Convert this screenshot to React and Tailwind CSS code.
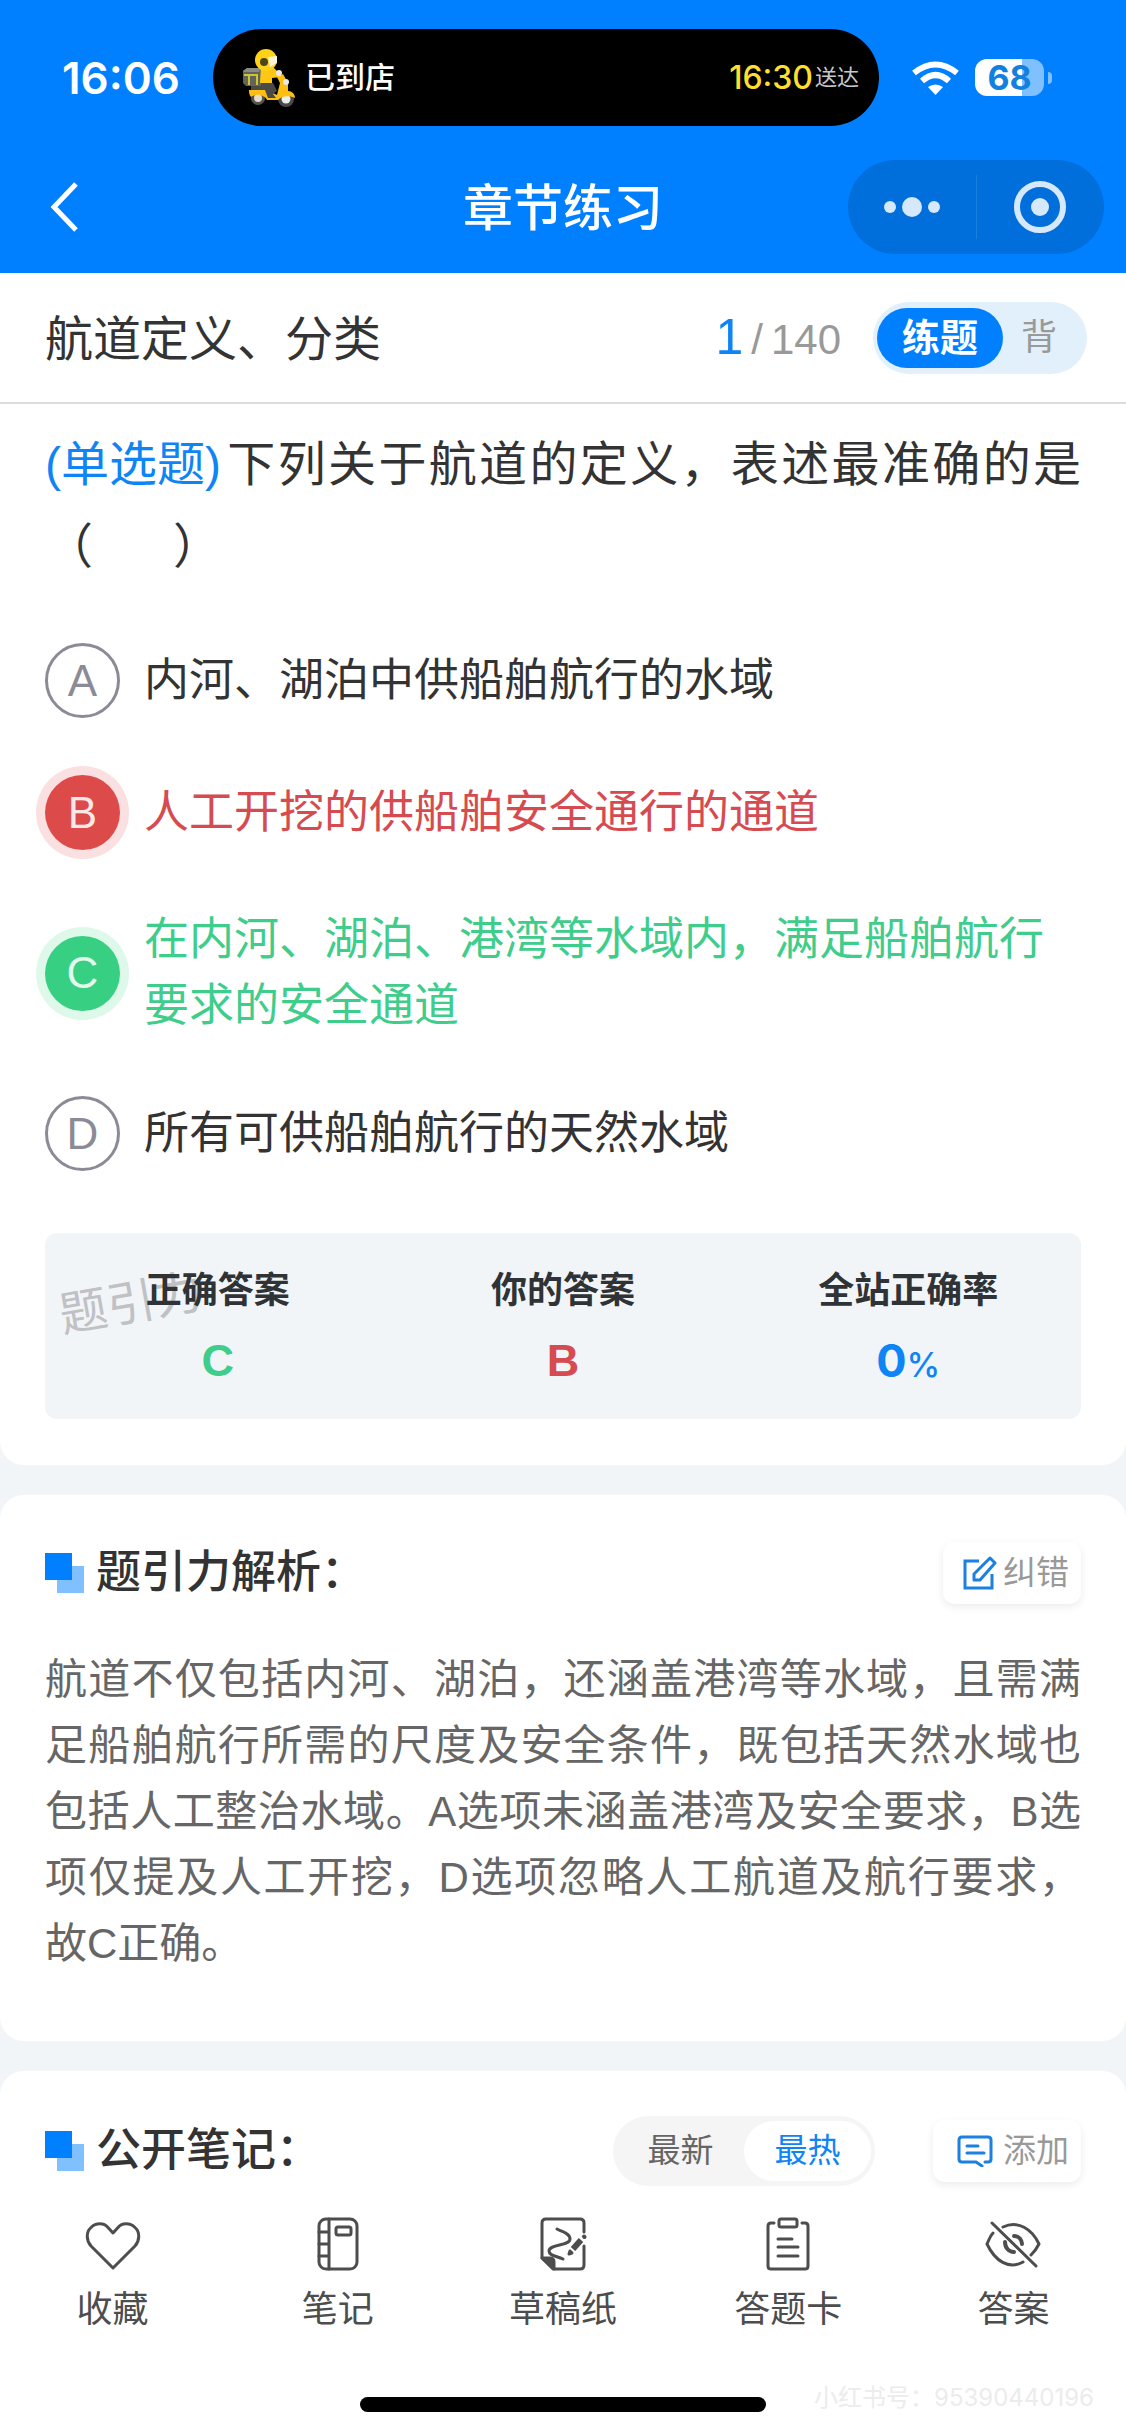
import React, { useState } from "react";

const options = [
  { key: "A", text: "内河、湖泊中供船舶航行的水域", state: "idle" },
  { key: "B", text: "人工开挖的供船舶安全通行的通道", state: "wrong" },
  {
    key: "C",
    text: "在内河、湖泊、港湾等水域内，满足船舶航行要求的安全通道",
    state: "right",
  },
  { key: "D", text: "所有可供船舶航行的天然水域", state: "idle" },
];

const badgeStyles = {
  idle: "border-[3px] border-[#8b8b97] text-[#8b8b97]",
  wrong: "bg-[#dd4a4a] text-[#fde8e8] ring-9 ring-[#fbe0e1]",
  right: "bg-[#37d083] text-[#e3faee] ring-9 ring-[#def8ea]",
};

const textStyles = {
  idle: "text-[#333333]",
  wrong: "text-[#d64b4f]",
  right: "text-[#3fcd8b]",
};

const RiderIcon = () => (
  <svg viewBox="0 0 52 58" className="h-[58px] w-[52px]">
    <circle cx="15" cy="49" r="7" fill="#55534e" />
    <circle cx="15" cy="49" r="4" fill="#e8dcc8" />
    <circle cx="43" cy="50" r="8" fill="#4a4a4a" />
    <circle cx="43" cy="50" r="4.500" fill="#eee" />
    <path d="M6 41h18l10 5 3-12-3-6 6-3 5 9v8c4 0 7 3 7 7-6-3-14-2-17 2H24c-2-5-12-7-16-3-2-2-2-5-2-7z" fill="#fdc012" />
    <path d="M18 34h12l4 8-4 3 3 4h-8l-3-8H8v-4z" fill="#4a4a48" />
    <path d="M0 22l4-3h14v18H3l-3-3z" fill="#63635a" />
    <path d="M0 22l4-3h14l-2 4H1z" fill="#8b8b85" />
    <path d="M1 25h14v2H1zM5 25h2v11H5zM13 25h2v11h-2z" fill="#c9c43a" />
    <path d="M18 17h11l6 6 3 1v4l-9 1v5H17z" fill="#ffc715" />
    <circle cx="36" cy="24" r="3" fill="#ece9e4" />
    <circle cx="43" cy="33" r="3" fill="#ece9e4" />
    <circle cx="23" cy="11" r="11" fill="#ffd21a" />
    <path d="M25 8l9-1v7l-7 4z" fill="#fff4d9" />
    <circle cx="21" cy="13" r="4" fill="#4d441c" />
  </svg>
);

const WifiIcon = () => (
  <svg viewBox="0 0 47 34" className="h-[34px] w-[47px]" fill="none" stroke="#fff" strokeWidth="6">
    <path d="M2 12Q23.500-5 45 12" />
    <path d="M10 20Q23.500 8 37 20" />
    <path d="M16 26Q23.500 21 31 26L23.500 34z" fill="#fff" stroke="none" />
  </svg>
);

const StatusBar = () => (
  <div className="flex items-center pt-[29px] pl-[62px]">
    <time className="w-[151px] font-[Inter] text-[44px] leading-none font-semibold">16:06</time>
    <div className="flex h-[97px] flex-1 items-center rounded-full bg-black pr-5 pl-[30px]">
      <RiderIcon />
      <span className="ml-2.5 text-[30px] font-medium">已到店</span>
      <span className="ml-auto font-[Inter] text-[32px] font-medium text-[#ffdf2e]">16:30</span>
      <span className="ml-0.5 text-[22px] text-[#c8c8c8]">送达</span>
    </div>
    <div className="flex w-[247px] items-center pl-[33px]">
      <WifiIcon />
      <div className="ml-4 flex h-[37px] w-[69px] items-center justify-center rounded-xl bg-linear-to-r from-white from-68% to-[#80c0ff] to-68% font-[Inter] text-[34px] leading-none font-bold text-[#1380e0]">
        68
      </div>
      <div className="ml-1 h-3 w-1 rounded-r-full bg-[#80c0ff]" />
    </div>
  </div>
);

const NavBar = () => (
  <div className="grid grid-cols-[1fr_auto_1fr] items-center px-[22px] pt-[34px] pb-[19px]">
    <button type="button" aria-label="返回" className="justify-self-start pl-7">
      <svg viewBox="0 0 28 50" className="h-[50px] w-7" fill="none" stroke="#fff" strokeWidth="5">
        <path d="M26 2L4 25l22 23" />
      </svg>
    </button>
    <h1 className="pt-1 text-[50px] leading-none font-medium">章节练习</h1>
    <div className="flex h-[94px] w-64 items-center justify-self-end rounded-full bg-[#006fdb]">
      <button type="button" aria-label="更多" className="flex flex-1 items-center justify-center gap-1.5">
        <span className="size-3 rounded-full bg-[#d6e8fb]" />
        <span className="size-5 rounded-full bg-[#d6e8fb]" />
        <span className="size-3 rounded-full bg-[#d6e8fb]" />
      </button>
      <span className="h-16 w-px bg-[#1a7de0]" />
      <button type="button" aria-label="关闭" className="flex flex-1 justify-center">
        <span className="flex size-[52px] items-center justify-center rounded-full border-[6px] border-[#d6e8fb]">
          <span className="size-[18px] rounded-full bg-[#d6e8fb]" />
        </span>
      </button>
    </div>
  </div>
);

const ModeBar = ({ mode, onChange }) => (
  <div className="flex h-[131px] items-center border-b-2 border-[#dcdcdc] bg-white pr-[39px] pl-[45px]">
    <h2 className="pt-1 text-[48px] text-[#333333]">航道定义、分类</h2>
    <p className="ml-auto flex items-baseline gap-2 pt-1 text-[42px] text-[#999999]">
      <span className="text-[50px] leading-none text-[#0f84f5]">1</span>
      <span>/</span>
      <span>140</span>
    </p>
    <div className="ml-8 flex h-[72px] items-center rounded-full bg-[#e2f0fc] pr-3 pl-1">
      <button
        type="button"
        onClick={() => onChange("practice")}
        className={`h-[60px] w-[126px] rounded-full text-[38px] leading-none ${
          mode === "practice" ? "bg-[#0080ff] font-bold text-white" : "text-[#999999]"
        }`}
      >
        练题
      </button>
      <button
        type="button"
        onClick={() => onChange("recite")}
        className={`h-[60px] w-[72px] rounded-full text-4xl leading-none ${
          mode === "recite" ? "bg-[#0080ff] font-bold text-white" : "text-[#999999]"
        }`}
      >
        背
      </button>
    </div>
  </div>
);

const AnswerStats = () => (
  <div className="relative mt-[62px] grid h-[186px] grid-cols-3 rounded-xl bg-[#f2f5f8] pt-[34px] text-center">
    <span className="absolute top-[38px] left-[14px] -rotate-10 text-[48px] leading-[66px] text-[#bfc1c4]">题引力</span>
    <div className="relative">
      <p className="text-4xl leading-[48px] font-bold text-[#303336]">正确答案</p>
      <p className="mt-4 text-[45px] leading-[60px] font-bold text-[#3fcd8b]">C</p>
    </div>
    <div>
      <p className="text-4xl leading-[48px] font-bold text-[#303336]">你的答案</p>
      <p className="mt-4 text-[45px] leading-[60px] font-bold text-[#d64b4f]">B</p>
    </div>
    <div>
      <p className="text-4xl leading-[48px] font-bold text-[#303336]">全站正确率</p>
      <p className="mt-4 font-[Inter] text-[45px] leading-[60px] font-bold text-[#0f84f5]">
        0<span className="text-[34px] font-medium">%</span>
      </p>
    </div>
  </div>
);

const SectionTitle = ({ children }) => (
  <h3 className="flex items-center gap-3 text-[45px] leading-[62px] font-medium text-[#333333]">
    <svg viewBox="0 0 39 40" className="h-10 w-[39px]">
      <path d="M12 13h27v27H12z" fill="#80c0ff" />
      <path d="M0 0h27v27H0z" fill="#0080ff" />
    </svg>
    {children}
  </h3>
);

const EditIcon = () => (
  <svg viewBox="0 0 34 34" className="size-[34px]" fill="none" stroke="#1b80e0" strokeWidth="3">
    <path d="M16 5H2v27h27V18" />
    <path d="M27 2l5 5-15 17h-6v-6z" strokeLinejoin="round" />
  </svg>
);

const CommentIcon = () => (
  <svg viewBox="0 0 36 32" className="h-8 w-9" fill="none" stroke="#1b80e0" strokeWidth="3" strokeLinecap="round">
    <path d="M28 27h3q3 0 3-3V5q0-3-3-3H5Q2 2 2 5v19q0 3 3 3h14l6 4" />
    <path d="M10 11h11M10 18h17" />
  </svg>
);

const tabs = [
  {
    label: "收藏",
    icon: <path d="M28 53L6 31C1 25 1 17 6 12.500c5-5 13-5 17 0l5 5.500 5-5.500c4-5 12-5 17 0 5 4.500 5 12.500 0 18.500z" />,
  },
  {
    label: "笔记",
    icon: (
      <>
        <rect x="9" y="4" width="38" height="50" rx="7" />
        <path d="M19 4v50M9 17h10M9 29h10M9 41h10" />
        <rect x="26" y="12" width="15" height="8" rx="2" />
      </>
    ),
  },
  {
    label: "草稿纸",
    icon: (
      <>
        <path d="M49 17V8q0-4-4-4H11Q7 4 7 8v35l11 11h27q4 0 4-4V31" />
        <path d="M7 43h8q4 0 4 4v7z" fill="#4d4d4d" />
        <path d="M22 14c5 3 13 4 13 10 0 7-21 5-21 12 0 5 8 5 14 8" />
        <path d="M46 25L38 34" strokeWidth="6" strokeLinecap="butt" />
        <path d="M49 21.500l.5.5" strokeWidth="4" />
        <path d="M34 39l1-3 2 2z" />
      </>
    ),
  },
  {
    label: "答题卡",
    icon: (
      <>
        <path d="M14 8h-3Q8 8 8 11v40q0 3 3 3h34q3 0 3-3V11q0-3-3-3h-3" />
        <rect x="19" y="4" width="18" height="8" rx="2" />
        <path d="M18 24h14M18 32h20M18 41h20" />
      </>
    ),
  },
  {
    label: "答案",
    icon: (
      <>
        <path d="M7 8l44 43" />
        <path d="M18 12C33 5 47 14 54 29c-2 4-5 8-8 11" />
        <path d="M8 18C5 21 4 25 2 29c8 17 22 26 36 18" />
        <path d="M29 21c5 0 8 4 8 8M20 27c0 6 4 10 9 10" strokeWidth="4" />
      </>
    ),
  },
];

const BottomBar = () => (
  <nav className="relative bg-white pt-[14px] pb-6">
    <div className="grid grid-cols-5">
      {tabs.map((tab) => (
        <button
          key={tab.label}
          type="button"
          className="flex flex-col items-center gap-[14px] text-4xl leading-[50px] text-[#4d4d4d]"
        >
          <svg
            viewBox="0 0 56 56"
            className="size-14"
            fill="none"
            stroke="#4d4d4d"
            strokeWidth="3"
            strokeLinecap="round"
            strokeLinejoin="round"
          >
            {tab.icon}
          </svg>
          {tab.label}
        </button>
      ))}
    </div>
    <p className="absolute right-8 bottom-[22px] font-['Inter','Noto_Sans_CJK_SC',sans-serif] text-2xl text-[#ececec]">
      小红书号：95390440196
    </p>
    <div className="mx-auto mt-[62px] h-[15px] w-[36%] rounded-full bg-black" />
  </nav>
);

const App = () => {
  const [mode, setMode] = useState("practice");
  const [sort, setSort] = useState("hot");

  return (
    <div className="bg-[#f2f5f8] font-['Liberation_Sans','Noto_Sans_CJK_SC',sans-serif]" lang="zh-CN">
      <header className="bg-[#0080ff] text-white">
        <StatusBar />
        <NavBar />
      </header>

      <ModeBar mode={mode} onChange={setMode} />

      <main>
        <section className="rounded-b-3xl bg-white px-[45px] pt-5 pb-[46px]">
          <p className="text-justify text-[48px] leading-[82px] text-[#333333]">
            <span className="mr-1 inline-block text-[#0f84f5]">(单选题)</span>
            下列关于航道的定义，表述最准确的是（{"\u00a0".repeat(6)}）
          </p>

          <div className="mt-[55px] flex flex-col gap-[57px]">
            {options.map((option) => (
              <button key={option.key} type="button" className="flex items-center gap-6 text-left">
                <span
                  className={`flex size-[75px] shrink-0 items-center justify-center rounded-full text-[44px] leading-none ${
                    badgeStyles[option.state]
                  }`}
                >
                  {option.key}
                </span>
                <span className={`text-[45px] leading-[66px] ${textStyles[option.state]}`}>{option.text}</span>
              </button>
            ))}
          </div>

          <AnswerStats />
        </section>

        <section className="mt-[30px] rounded-3xl bg-white px-[45px] pt-[47px] pb-[64px]">
          <div className="flex items-center justify-between">
            <SectionTitle>题引力解析：</SectionTitle>
            <button
              type="button"
              className="flex h-[62px] items-center gap-1.5 rounded-xl pr-3 pl-5 text-[33px] text-[#999999] shadow-[0_3px_8px_rgba(0,0,0,0.08)]"
            >
              <EditIcon />
              纠错
            </button>
          </div>
          <p className="mt-[43px] text-justify text-[42px] leading-[66px] text-[#666666]">
            航道不仅包括内河、湖泊，还涵盖港湾等水域，且需满足船舶航行所需的尺度及安全条件，既包括天然水域也包括人工整治水域。A选项未涵盖港湾及安全要求，B选项仅提及人工开挖，D选项忽略人工航道及航行要求，故C正确。
          </p>
        </section>

        <section className="mt-[30px] rounded-t-3xl bg-white px-[45px] pt-[45px] pb-[15px]">
          <div className="flex items-center">
            <SectionTitle>公开笔记：</SectionTitle>
            <div className="ml-auto flex h-[70px] items-center rounded-full bg-[#f5f5f5] px-1">
              <button
                type="button"
                onClick={() => setSort("new")}
                className={`h-[60px] w-[127px] rounded-full text-[33px] ${
                  sort === "new" ? "bg-white text-[#0f84f5]" : "text-[#666666]"
                }`}
              >
                最新
              </button>
              <button
                type="button"
                onClick={() => setSort("hot")}
                className={`h-[60px] w-[127px] rounded-full text-[33px] ${
                  sort === "hot" ? "bg-white text-[#0f84f5]" : "text-[#666666]"
                }`}
              >
                最热
              </button>
            </div>
            <button
              type="button"
              className="ml-[58px] flex h-[62px] items-center gap-2.5 rounded-xl pr-3 pl-6 text-[33px] text-[#999999] shadow-[0_3px_8px_rgba(0,0,0,0.08)]"
            >
              <CommentIcon />
              添加
            </button>
          </div>
        </section>
      </main>

      <BottomBar />
    </div>
  );
};

export default App;
